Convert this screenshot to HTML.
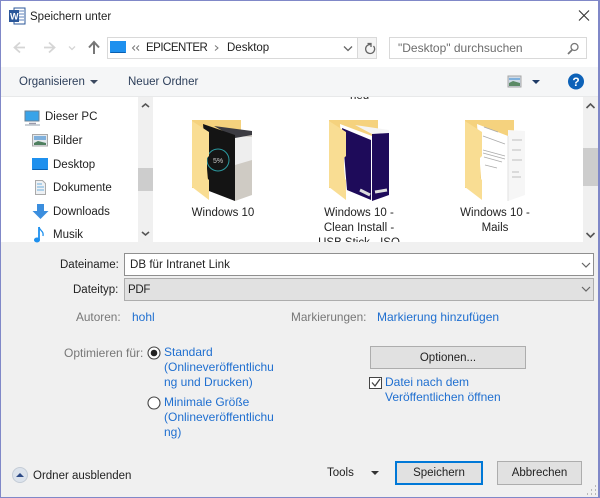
<!DOCTYPE html>
<html><head><meta charset="utf-8"><style>
html,body{margin:0;padding:0;width:600px;height:498px;overflow:hidden;background:#fff}
body{position:relative;font-family:"Liberation Sans",sans-serif;font-size:11.5px;color:#222}
.a{position:absolute}
.t{position:absolute;white-space:nowrap;line-height:15px;margin-top:1px}
.b{color:#1f6fd0;font-size:12px}.g{color:#777;font-size:11.800px}
.c{text-align:center}
.btn{position:absolute;box-sizing:border-box;background:#e1e1e1;border:1px solid #adadad;text-align:center;color:#222}
svg{position:absolute;left:0;top:0}
</style></head><body>
<div class="a" style="left:0;top:67px;width:600px;height:29px;background:#f5f6f7"></div>
<div class="a" style="left:0;top:96px;width:600px;height:1px;background:#e8e9ea"></div>
<div class="a" style="left:0;top:242px;width:600px;height:256px;background:#f0f0f0"></div>
<div class="a" style="left:138px;top:97px;width:15px;height:145px;background:#f0f0f0"></div>
<div class="a" style="left:138px;top:168px;width:15px;height:23px;background:#cdcdcd"></div>
<div class="a" style="left:583px;top:97px;width:15px;height:145px;background:#f0f0f0"></div>
<div class="a" style="left:583px;top:148px;width:15px;height:38px;background:#cdcdcd"></div>
<div class="a" style="left:107px;top:37px;width:270px;height:22px;box-sizing:border-box;border:1px solid #d9d9d9;background:#fff"></div>
<div class="a" style="left:357px;top:37px;width:20px;height:22px;box-sizing:border-box;border:1px solid #d9d9d9;background:#f4f4f4"></div>
<div class="a" style="left:389px;top:37px;width:198px;height:22px;box-sizing:border-box;border:1px solid #d9d9d9;background:#fff"></div>
<div class="a" style="left:124px;top:253px;width:470px;height:23px;box-sizing:border-box;border:1px solid #8f8f8f;background:#fff"></div>
<div class="a" style="left:124px;top:278px;width:470px;height:23px;box-sizing:border-box;border:1px solid #adadad;background:#e1e1e1"></div>

<svg width="600" height="498" viewBox="0 0 600 498">
<!-- word icon -->
<rect x="14" y="8" width="11" height="16" fill="#fff" stroke="#2b579a"/>
<path d="M18 11h6M18 14h6M18 17h6M18 20h6" stroke="#5f83bd"/>
<rect x="9" y="10" width="10" height="12" fill="#2b579a"/>
<text x="10" y="19.500" font-size="9" font-family="Liberation Sans" font-weight="bold" fill="#fff">W</text>
<!-- close -->
<path d="M579 10.500l10 10M589 10.500l-10 10" stroke="#333" stroke-width="1.100" fill="none"/>
<!-- nav arrows -->
<path d="M25 47.500H15M20 42.500l-5.500 5 5.500 5" stroke="#d5d5d5" stroke-width="1.800" fill="none"/>
<path d="M44 47.500H54M49 42.500l5.500 5-5.500 5" stroke="#d5d5d5" stroke-width="1.800" fill="none"/>
<path d="M69 46.500l3 3 3-3" stroke="#d5d5d5" stroke-width="1.300" fill="none"/>
<path d="M94 54V43M89 47.500l5-5.500 5 5.500" stroke="#777" stroke-width="2" fill="none"/>
<!-- breadcrumb desktop -->
<rect x="110" y="41" width="16" height="12" fill="#1e90ee"/><path d="M110.500 52.500h15" stroke="#0a5fb0"/>
<path d="M135 45.500l-2.500 2.500 2.500 2.500M139 45.500l-2.500 2.500 2.500 2.500M215 45.500l3 2.500-3 2.500" stroke="#777" fill="none"/>
<path d="M344 46.500l4 4 4-4" stroke="#666" stroke-width="1.300" fill="none"/>
<path d="M370.500 44.500a4.500 4.500 0 1 0 3 1.500M367.500 43.500h3.500v3.500" stroke="#666" stroke-width="1.300" fill="none"/>
<!-- search -->
<circle cx="574.500" cy="47" r="3.500" fill="none" stroke="#777" stroke-width="1.300"/><path d="M572 50l-4 4" stroke="#777" stroke-width="1.800"/>
<!-- toolbar -->
<path d="M90 80h8l-4 4z" fill="#3c4a60"/>
<rect x="508" y="76" width="13" height="11" fill="#d0dbe6" stroke="#a6a6a6"/><path d="M509 83l4-2 7 2v3h-11z" fill="#5c8a66"/><path d="M509 78h11v2h-11z" fill="#7fb0dc"/>
<path d="M532 80h8l-4 4z" fill="#1e3a66"/>
<circle cx="576" cy="81.500" r="8" fill="#0d62b8"/>
<text x="576" y="86" font-size="12" font-weight="bold" fill="#fff" text-anchor="middle" font-family="Liberation Sans">?</text>
<!-- scroll arrows -->
<path d="M142 107l3.500-3 3.500 3M142 232l3.500 3 3.500-3M586.500 108l4-4 4 4M586.500 233l4 4 4-4" stroke="#555" stroke-width="1.600" fill="none"/>
<!-- nav icons -->
<rect x="25" y="111" width="14" height="10" fill="#39a3e8" stroke="#6a8296"/><path d="M29 123.500h7" stroke="#99a" stroke-width="1.500"/><path d="M25 125h15" stroke="#b8c0c8" stroke-width="1.500"/>
<rect x="32.500" y="134.500" width="15" height="11.500" fill="#e4e8ec" stroke="#a8a8a8"/><path d="M34 143l4-2 8 2v2H34z" fill="#4f7f5f"/><path d="M34 136h12v4H34z" fill="#7fb0dc"/>
<rect x="32" y="158" width="16" height="12" fill="#1e90ee"/><path d="M32.500 169.500h15" stroke="#0a5fb0"/>
<path d="M35.500 180.500h7l3 3v11h-10z" fill="#eef1f4" stroke="#aaa"/><path d="M37 184h5M37 187h7M37 190h7" stroke="#6faede"/>
<path d="M37 204h7v7h4.500l-8 8-8-8H37z" fill="#3b8ede"/>
<path d="M39 227v13" stroke="#1e90ee" stroke-width="1.800"/><path d="M39 227c1 4 5 4 4 9" stroke="#1e90ee" stroke-width="1.300" fill="none"/><ellipse cx="37" cy="240" rx="3" ry="2.500" fill="#1e90ee"/>

<!-- folder 1 -->
<path d="M192 120H241V188H192Z" fill="#f5d27e"/>
<path d="M235 133L252 134V195L235 201Z" fill="#cfcbc4"/>
<path d="M235 136L252 137V160L235 165Z" fill="#eeeeee"/>
<path d="M214 126L252 131V135L235 138Z" fill="#3c3c42"/>
<path d="M203 124L235 135V201L209 191Z" fill="#141414"/>
<circle cx="218" cy="160" r="11" fill="none" stroke="#2b9aa0" stroke-width="1"/>
<text x="218" y="163" font-size="7" fill="#ccc" text-anchor="middle" font-family="Liberation Sans">5%</text>
<path d="M192 121L209 132V156L207 158V178L209 180V200L192 187Z" fill="#f9dd93"/>
<!-- folder 2 -->
<path d="M329 120H378V188H329Z" fill="#f5d27e"/>
<path d="M372 132L389 133V195L372 201Z" fill="#1e0b5a"/>
<path d="M340 124L372 136V201L346 191Z" fill="#fff"/>
<path d="M342 128L371 140V200L347 190Z" fill="#1e0b5a"/>
<path d="M355 125L389 130V133L372 134Z" fill="#f4f4f4"/>
<path d="M360 190l10 5M375 192l12-2" stroke="#ddd" stroke-width="3"/>
<path d="M329 121L346 132V156L344 158V178L346 180V200L329 187Z" fill="#f9dd93"/>
<!-- folder 3 -->
<path d="M465 120H514V188H465Z" fill="#f5d27e"/>
<path d="M508 130L525 131V195L508 201Z" fill="#f6f6f6"/>
<path d="M477 124L508 136V201L482 191Z" fill="#fff"/>
<path d="M483 136l22 8M483 150l22 6M483 153l22 6M484 157l18 5M485 165l12 3M484 127l14 5M512 140h10M512 150h9M512 160h10M512 172h7M512 177h9" stroke="#aaa" stroke-width=".8"/>
<path d="M508 136V201" stroke="#e2e2e2"/>
<path d="M465 121L482 132V156L480 158V178L482 180V200L465 187Z" fill="#f9dd93"/>

<!-- combos -->
<path d="M582 263l4 4 4-4M582 287l4 4 4-4" stroke="#666" stroke-width="1.200" fill="none"/>
<!-- radios -->
<circle cx="154" cy="353" r="6" fill="#fff" stroke="#444" stroke-width="1.100"/><circle cx="154" cy="353" r="3.300" fill="#222"/>
<circle cx="154" cy="403" r="6" fill="#fff" stroke="#444" stroke-width="1.100"/>
<!-- checkbox -->
<rect x="369.500" y="377.500" width="12" height="11" fill="#fff" stroke="#444"/>
<path d="M372 382.500l3 3.500 5-7" stroke="#444" stroke-width="1.300" fill="none"/>
<!-- hide folders -->
<circle cx="20" cy="475" r="7.500" fill="#dce3ec" stroke="#c4ccd6"/><path d="M16 477h8l-4-4z" fill="#2c4a86"/>
<path d="M371 471h8l-4 4z" fill="#333"/>
<path d="M595 494h1M591 494h1M587 494h1M595 490h1M591 490h1M595 486h1" stroke="#b8b8b8" stroke-width="2"/>
</svg>

<div class="t" style="left:30px;top:9px;font-size:11.500px">Speichern unter</div>
<div class="t" style="left:146px;top:40px;font-size:11.500px;letter-spacing:-.5px">EPICENTER</div>
<div class="t" style="left:227px;top:40px;font-size:11.500px">Desktop</div>
<div class="t" style="left:398px;top:40px;font-size:12px;color:#6d6d6d">"Desktop" durchsuchen</div>
<div class="t" style="left:19px;top:74px;color:#2c3e5a">Organisieren</div>
<div class="t" style="left:128px;top:74px;color:#2c3e5a">Neuer Ordner</div>
<div class="t" style="left:45px;top:109px">Dieser PC</div>
<div class="t" style="left:53px;top:133px">Bilder</div>
<div class="t" style="left:53px;top:157px">Desktop</div>
<div class="t" style="left:53px;top:180px">Dokumente</div>
<div class="t" style="left:53px;top:204px">Downloads</div>
<div class="t" style="left:53px;top:227px">Musik</div>

<div class="a" style="left:156px;top:97px;width:427px;height:145px;overflow:hidden">
<div class="t" style="left:194px;top:-9px">neu</div>
<div class="t c" style="left:0;width:134px;top:108px">Windows 10</div>
<div class="t c" style="left:136px;width:134px;top:108px">Windows 10 -</div>
<div class="t c" style="left:136px;width:134px;top:123px">Clean Install -</div>
<div class="t c" style="left:136px;width:134px;top:138px">USB Stick - ISO</div>
<div class="t c" style="left:272px;width:134px;top:108px">Windows 10 -</div>
<div class="t c" style="left:272px;width:134px;top:123px">Mails</div>
</div>

<div class="t" style="left:60px;top:257px">Dateiname:</div>
<div class="t" style="left:73px;top:282px">Dateityp:</div>
<div class="t" style="left:130px;top:256px;font-size:11.600px">DB für Intranet Link</div>
<div class="t" style="left:128px;top:282px;font-size:11.500px;letter-spacing:-.3px">PDF</div>
<div class="t g" style="left:76px;top:309px">Autoren:</div>
<div class="t b" style="left:132px;top:309px">hohl</div>
<div class="t g" style="left:291px;top:309px">Markierungen:</div>
<div class="t b" style="left:377px;top:309px">Markierung hinzufügen</div>
<div class="t g" style="left:64px;top:345px;font-size:12px">Optimieren für:</div>
<div class="t b" style="left:164px;top:344px">Standard</div>
<div class="t b" style="left:164px;top:359px">(Onlineveröffentlichu</div>
<div class="t b" style="left:164px;top:374px">ng und Drucken)</div>
<div class="t b" style="left:164px;top:394px">Minimale Größe</div>
<div class="t b" style="left:164px;top:409px">(Onlineveröffentlichu</div>
<div class="t b" style="left:164px;top:424px">ng)</div>
<div class="t b" style="left:385px;top:374px">Datei nach dem</div>
<div class="t b" style="left:385px;top:389px">Veröffentlichen öffnen</div>
<div class="btn" style="left:370px;top:346px;width:156px;height:23px;line-height:22px">Optionen...</div>
<div class="t" style="left:33px;top:468px">Ordner ausblenden</div>
<div class="t" style="left:327px;top:465px">Tools</div>
<div class="btn" style="left:395px;top:461px;width:88px;height:24px;line-height:20px;border:2px solid #0078d7">Speichern</div>
<div class="btn" style="left:497px;top:461px;width:85px;height:24px;line-height:22px">Abbrechen</div>

<div class="a" style="left:0;top:0;width:600px;height:498px;box-sizing:border-box;border:1px solid #8088c8;border-right-width:2px;border-bottom-width:1px"></div>
</body></html>
